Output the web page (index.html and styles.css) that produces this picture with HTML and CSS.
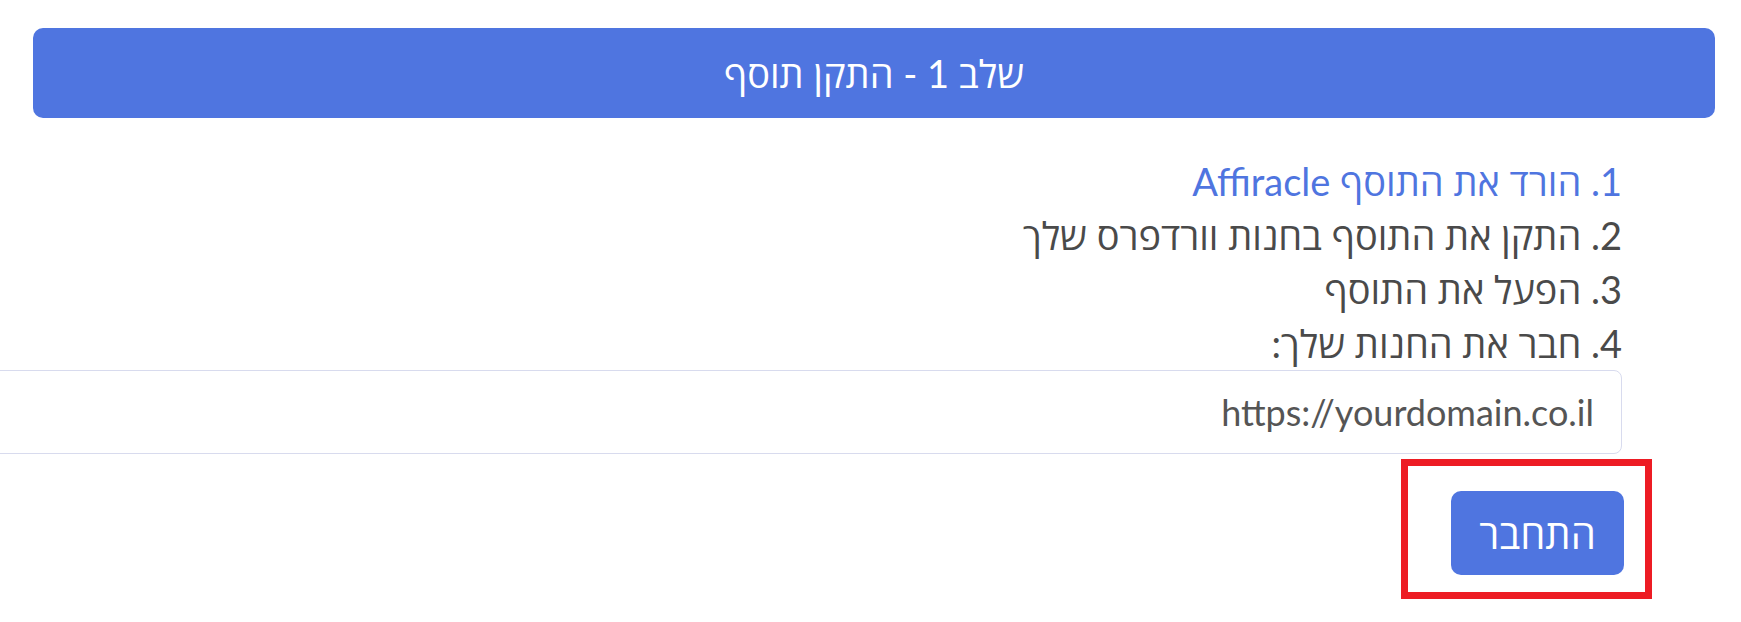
FILE: index.html
```html
<!DOCTYPE html>
<html lang="he" dir="rtl">
<head>
<meta charset="utf-8">
<title>שלב 1 - התקן תוסף</title>
<link rel="stylesheet" href="styles.css">
</head>
<body>
<div class="page">
  <div class="step-header">שלב 1 - התקן תוסף</div>
  <div class="content">
    <div class="steps">
      <div class="step"><a class="link" href="#">1. הורד את התוסף Affiracle</a></div>
      <div class="step">2. התקן את התוסף בחנות וורדפרס שלך</div>
      <div class="step">3. הפעל את התוסף</div>
      <div class="step">4. חבר את החנות שלך:</div>
    </div>
    <input class="url-input" type="text" dir="ltr" value="https://yourdomain.co.il">
    <div class="actions">
      <div class="btn-wrap">
        <button class="btn">התחבר</button>
        <div class="highlight"></div>
      </div>
    </div>
  </div>
</div>
</body>
</html>
```

FILE: styles.css
```css
html, body {
  margin: 0;
  padding: 0;
  background: #ffffff;
}
body {
  font-family: "Lato", "Open Sans", sans-serif;
  direction: rtl;
  color: #4a4a4a;
}
.page {
  padding: 28px 26px 40px 33px;
  overflow: hidden;
}
.step-header {
  height: 90px;
  background: #4f75e0;
  border-radius: 10px;
  color: #ffffff;
  display: flex;
  align-items: center;
  justify-content: center;
  font-size: 38px;
}
.content {
  padding-right: 93px;
}
.steps {
  margin-top: 36px;
  font-size: 38px;
  line-height: 54px;
}
.link {
  color: #4f75e0;
  text-decoration: none;
}
.url-input {
  display: block;
  box-sizing: border-box;
  width: calc(100% + 300px);
  height: 84px;
  margin: 0 0 0 -300px;
  border: 1px solid #d8dbee;
  border-radius: 8px;
  padding: 0 27px 0 12px;
  text-align: right;
  font-family: "Lato", "Open Sans", sans-serif;
  font-size: 36px;
  color: #555555;
  background: #fff;
  outline: none;
}
.actions {
  display: flex;
  margin-top: 37px;
  margin-right: -2px;
}
.btn-wrap {
  position: relative;
  display: flex;
}
.btn {
  width: 173px;
  height: 84px;
  border: none;
  border-radius: 10px;
  background: #4f75e0;
  color: #ffffff;
  font-family: "Lato", "Open Sans", sans-serif;
  font-size: 40px;
  padding: 0;
}
.highlight {
  position: absolute;
  top: -32px;
  right: -28px;
  bottom: -24px;
  left: -50px;
  border: 7px solid #ed1c24;
}
```
